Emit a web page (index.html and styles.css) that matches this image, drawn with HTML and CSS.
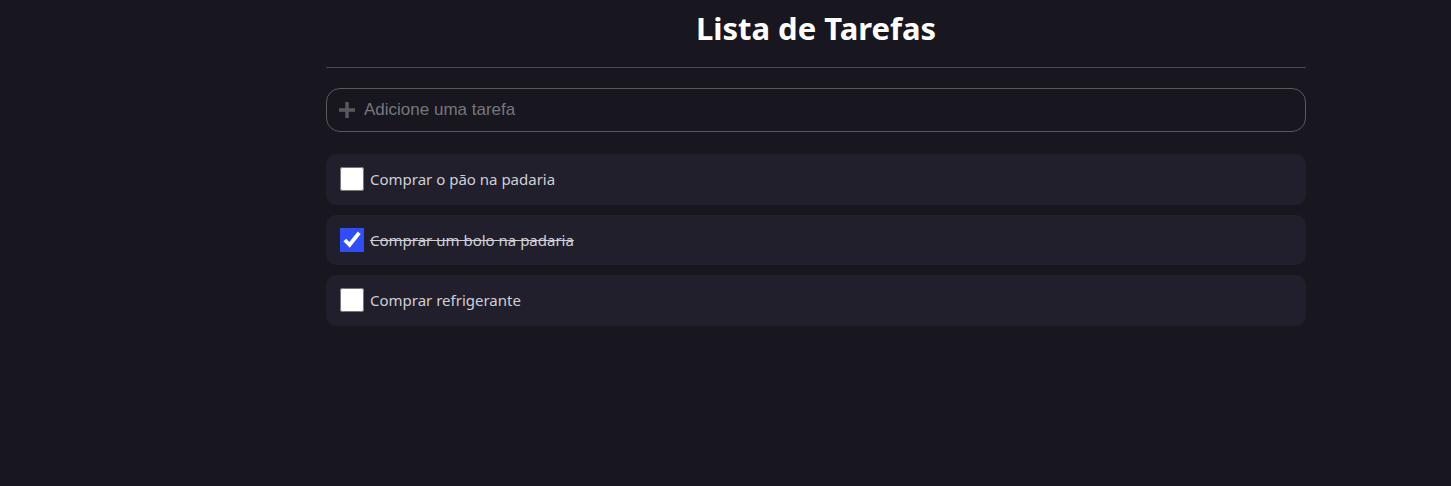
FILE: index.html
```html
<!DOCTYPE html>
<html lang="pt">
<head>
<meta charset="utf-8">
<title>Lista de Tarefas</title>
<link rel="stylesheet" href="styles.css">
</head>
<body>
<main class="app">
  <h1 class="title">Lista de Tarefas</h1>
  <hr class="divider">
  <label class="add">
    <svg class="plus" width="18" height="18" viewBox="0 0 18 18"><path d="M9 1v16M1 9h16" stroke="#5a5960" stroke-width="3.4" fill="none"/></svg>
    <input class="add-input" type="text" placeholder="Adicione uma tarefa">
  </label>
  <ul class="list">
    <li class="item"><input class="check" type="checkbox"><span class="text">Comprar o pão na padaria</span></li>
    <li class="item"><input class="check" type="checkbox" checked><span class="text done">Comprar um bolo na padaria</span></li>
    <li class="item"><input class="check" type="checkbox"><span class="text">Comprar refrigerante</span></li>
  </ul>
</main>
</body>
</html>
```
FILE: styles.css
```css
html, body {
  margin: 0;
  padding: 0;
  background: #18171f;
  height: 100%;
}
body {
  font-family: "Noto Sans", "Open Sans", sans-serif;
}
.app {
  width: 980px;
  margin-left: 326px;
  display: flex;
  flex-direction: column;
}
.title {
  margin: 0;
  padding-top: 9px;
  height: 38px;
  line-height: 38px;
  text-align: center;
  color: #ffffff;
  font-size: 31px;
  font-weight: 700;
}
.divider {
  margin: 20px 0 0;
  border: 0;
  border-top: 1px solid #4a4950;
  height: 0;
}
.add {
  margin-top: 20px;
  height: 44px;
  box-sizing: border-box;
  border: 1px solid #5a5960;
  border-radius: 14px;
  display: flex;
  align-items: center;
  gap: 8px;
  padding-left: 11px;
}
.plus { flex: none; }
.add-input {
  flex: 1;
  background: transparent;
  border: 0;
  outline: none;
  font-family: "Liberation Sans", Arial, sans-serif;
  font-size: 17px;
  color: #ddd;
  padding: 0;
}
.add-input::placeholder { color: #77767c; }
.list {
  list-style: none;
  margin: 22px 0 0;
  padding: 0;
  display: flex;
  flex-direction: column;
  gap: 10px;
}
.item {
  height: 50.5px;
  background: #201f2b;
  border-radius: 10px;
  display: flex;
  align-items: center;
  padding-left: 14px;
  gap: 6px;
}
.check {
  width: 24px;
  height: 24px;
  margin: 0;
  accent-color: #2f4dff;
}
.text {
  color: #d0cfd6;
  font-size: 15px;
}
.text.done { text-decoration: line-through; }
```
